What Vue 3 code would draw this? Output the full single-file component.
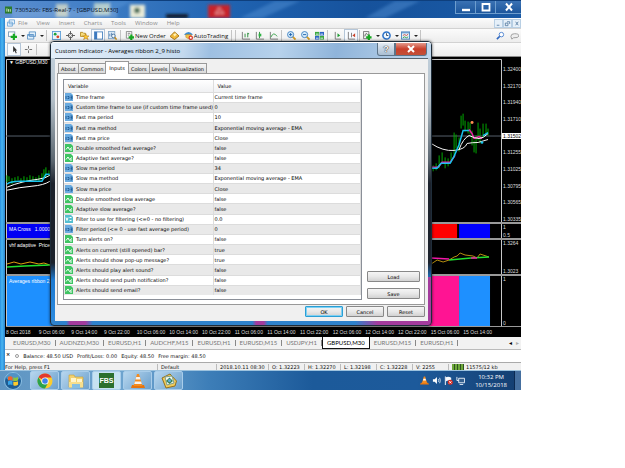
<script setup>
import { ref } from 'vue'

const menus = ['File', 'View', 'Insert', 'Charts', 'Tools', 'Window', 'Help']

const tools = [
  { id: 'chart', caret: true },
  { id: 'profiles', caret: true },
  { id: 'sep' },
  { id: 'market' },
  { id: 'cross' },
  { id: 'folder' },
  { id: 'panel', on: true },
  { id: 'tester' },
  { id: 'sep' },
  { id: 'order', text: 'New Order' },
  { id: 'meta' },
  { id: 'auto', text: 'AutoTrading' },
  { id: 'sep' },
  { id: 'sep' },
  { id: 'bars' },
  { id: 'candles' },
  { id: 'line' },
  { id: 'sep' },
  { id: 'zoomin' },
  { id: 'zoomout' },
  { id: 'tile' },
  { id: 'sep' },
  { id: 'scroll' },
  { id: 'shift', on: true },
  { id: 'sep' },
  { id: 'indicator', caret: true },
  { id: 'clock', caret: true },
  { id: 'template', caret: true },
  { id: 'sep' },
]

const dialogTabs = ['About', 'Common', 'Inputs', 'Colors', 'Levels', 'Visualization']
const activeTab = ref('Inputs')

const rows = [
  ['n', 'Time frame', 'Current time frame'],
  ['n', 'Custom time frame to use (if custom time frame used)', '0'],
  ['n', 'Fast ma period', '10'],
  ['n', 'Fast ma method', 'Exponential moving average - EMA'],
  ['n', 'Fast ma price', 'Close'],
  ['b', 'Double smoothed fast average?', 'false'],
  ['b', 'Adaptive fast average?', 'false'],
  ['n', 'Slow ma period', '34'],
  ['n', 'Slow ma method', 'Exponential moving average - EMA'],
  ['n', 'Slow ma price', 'Close'],
  ['b', 'Double smoothed slow average', 'false'],
  ['b', 'Adaptive slow average?', 'false'],
  ['d', 'Filter to use for filtering (<=0 - no filtering)', '0.0'],
  ['n', 'Filter period (<= 0 - use fast average period)', '0'],
  ['b', 'Turn alerts on?', 'false'],
  ['b', 'Alerts on current (still opened) bar?', 'true'],
  ['b', 'Alerts should show pop-up message?', 'true'],
  ['b', 'Alerts should play alert sound?', 'false'],
  ['b', 'Alerts should send push notification?', 'false'],
  ['b', 'Alerts should send email?', 'false'],
]

const prices = ['1.32400', '1.32170', '1.31940', '1.31710', '1.31502', '1.31255', '1.31025', '1.30795', '1.30565', '1.30335']

const times = [
  '8 Oct 2018', '9 Oct 06:00', '9 Oct 14:00', '9 Oct 22:00', '10 Oct 06:00', '10 Oct 14:00', '10 Oct 22:00',
  '11 Oct 06:00', '11 Oct 14:00', '11 Oct 22:00', '12 Oct 06:00', '12 Oct 14:00', '12 Oct 22:00', '15 Oct 06:00', '15 Oct 14:00',
]

const chartTabs = [
  'EURUSD,M30', 'AUDNZD,M30', 'EURUSD,H1', 'AUDCHF,M15', 'EURUSD,H1', 'EURUSD,M15', 'USDJPY,H1', 'GBPUSD,M30', 'EURUSD,M15', 'EURUSD,H1',
]
const activeChart = ref(7)

const quote = ['O: 1.32223', 'H: 1.32270', 'L: 1.32198', 'C: 1.32228', 'V: 2255']

/* x, high, low of each candle */
const candlesLeft = [
  [7, 175, 182], [9, 176, 181], [12, 178, 184], [15, 177, 182], [18, 176, 180], [21, 178, 183], [24, 176, 181],
  [27, 177, 181], [30, 175, 181], [33, 176, 180], [36, 177, 181], [39, 175, 181], [42, 173, 180], [44, 169, 178], [46, 167, 177], [49, 170, 176],
]
const candlesRight = [
  [434, 165, 171], [437, 163, 170], [440, 155, 168], [443, 152, 162], [446, 157, 168], [449, 158, 166], [452, 152, 162],
  [455, 132, 157], [457, 134, 148], [460, 137, 151], [462, 115, 128], [464, 113, 125], [466, 120, 131], [469, 121, 133],
  [471, 122, 134], [473, 130, 145], [475, 140, 152], [477, 135, 153], [479, 122, 140], [481, 128, 143], [484, 123, 137],
  [487, 123, 134], [489, 128, 135],
]
const wicks = (list) => list.map(([x, a, b]) => `M${x} ${a}V${b}`).join('')
</script>

<template>
  <main class="screen">
    <header class="titlebar">
      <svg class="backdrop" viewBox="0 0 521 18" preserveAspectRatio="none" aria-hidden="true">
        <defs>
          <filter id="haze" x="-20%" y="-20%" width="140%" height="140%"><feGaussianBlur stdDeviation="1.5" /></filter>
        </defs>
        <g filter="url(#haze)">
          <path d="M80 18L110 0H132L100 18ZM240 18L275 0H300L262 18ZM365 18L395 0H420L385 18Z" fill="#5d9bdb" opacity=".4" />
          <rect x="12" y="9" width="105" height="9" fill="#7fa9dc" opacity=".55" />
          <rect x="56" y="3" width="12" height="14" fill="#d9ddc8" opacity=".8" />
          <rect x="94" y="2" width="16" height="13" fill="#cfe0cf" opacity=".8" />
          <rect x="130" y="4" width="15" height="14" fill="#ebedd9" />
          <circle cx="137" cy="10" r="3" fill="#35624a" />
          <rect x="166" y="14" width="22" height="4" fill="#0b1422" />
          <rect x="208" y="4" width="22" height="14" fill="#c8202c" />
          <path d="M219 7L216 14M219 7L223 13M215 13H224" stroke="#f3b7b7" fill="none" />
        </g>
      </svg>
      <svg class="appicon" viewBox="0 0 8 8" aria-hidden="true">
        <rect width="8" height="8" fill="#2c7a2e" /><path d="M1 3H3M1 5H3M4 3V6M6 3V6" stroke="#d8f0c8" />
      </svg>
      <h1>7305206: FBS-Real-7 - [GBPUSD,M30]</h1>
      <div class="winbtns">
        <button aria-label="Minimize"><svg viewBox="0 0 12 10"><path d="M2 8H10" stroke="#fff" stroke-width="2.4" /></svg></button>
        <button aria-label="Maximize"><svg viewBox="0 0 12 10"><path d="M2.500 2H9.500V8.500H2.500Z" stroke="#fff" stroke-width="1.800" fill="none" /></svg></button>
        <button aria-label="Close"><svg viewBox="0 0 12 10"><path d="M3 1.500L9 8.500M9 1.500L3 8.500" stroke="#fff" stroke-width="2" /></svg></button>
      </div>
    </header>

    <div class="body">
      <nav class="menubar">
        <svg class="mdi" viewBox="0 0 9 8" aria-hidden="true"><path d="M2.500 .5H8.500V5H2.500ZM.5 3H6V7.500H.5Z" fill="#e8f3fc" stroke="#6fa6d6" /></svg>
        <a v-for="m in menus" :key="m" href="#">{{ m }}</a>
        <div class="mdibtns">
          <button aria-label="Minimize chart"><svg viewBox="0 0 8 8"><path d="M2 6H5" stroke="#5a7fa4" /></svg></button>
          <button aria-label="Restore chart"><svg viewBox="0 0 8 8"><path d="M3.500 2H6.500V4.500M1.500 3.500H4.500V6.500H1.500Z" fill="none" stroke="#5a7fa4" /></svg></button>
          <button aria-label="Close chart"><svg viewBox="0 0 8 8"><path d="M3 2L6 6M6 2L3 6" stroke="#5a7fa4" /></svg></button>
        </div>
      </nav>

      <div class="toolbar">
        <template v-for="(t, i) in tools" :key="i">
          <span v-if="t.id === 'sep'" class="sep"></span>
          <button v-else :class="['tool', { on: t.on, text: t.text, drop: t.caret }]" :aria-label="t.text || t.id">
            <svg viewBox="0 0 10 10" aria-hidden="true">
              <g v-if="t.id === 'chart'"><rect x=".5" y="1" width="7" height="5" fill="#fff" stroke="#7d9bb5" /><path d="M6.500 3V10M3 6.500H10" stroke="#16a821" stroke-width="2.400" /></g>
              <g v-else-if="t.id === 'profiles'"><path d="M2.500 1H9.500V6H2.500ZM.5 4H7.500V9H.5Z" fill="#e2f0fb" stroke="#5c94c6" /><path d="M1 4.500H7" stroke="#4e8cc8" /></g>
              <g v-else-if="t.id === 'market'"><rect x=".5" y=".5" width="9" height="9" fill="#e9f4fd" stroke="#5fa0d8" /><path d="M2 4L4 2L5 4Z" fill="#169c2c" /><circle cx="3.500" cy="3.500" r="1.500" fill="#22a33a" /><circle cx="6.500" cy="6.500" r="1.600" fill="#dd4426" /></g>
              <g v-else-if="t.id === 'cross'" stroke="#555" fill="none"><circle cx="5" cy="5" r="2.500" /><path d="M5 0V4M5 6V10M0 5H4M6 5H10" /></g>
              <g v-else-if="t.id === 'folder'"><path d="M.5 1.500H3L4 2.500H6V6H.5Z" fill="#f7dc7d" stroke="#b58a22" /><path d="M6.500 3L7.500 5.500H10L8 7L9 9.500L6.500 8L4 9.500L5 7L3 5.500H5.500Z" fill="#ffc933" stroke="#b97c10" stroke-width=".6" /></g>
              <g v-else-if="t.id === 'panel'"><rect x=".5" y="1" width="9" height="8" fill="#fff" stroke="#4a84c0" /><rect x="1" y="1" width="2.500" height="8" fill="#3c79c0" /></g>
              <g v-else-if="t.id === 'tester'"><rect x=".5" y=".5" width="7" height="8" fill="#dbeaf7" stroke="#83a8cb" /><path d="M2 6V3M4 5V2" stroke="#5a86b8" /><circle cx="6" cy="5.500" r="2" fill="#f4fbff" stroke="#456e99" /><path d="M7.500 7L9.500 9.500" stroke="#c78d19" stroke-width="1.600" /></g>
              <g v-else-if="t.id === 'order'"><path d="M1.500 .5H7.500V8H1.500Z" fill="#fff" stroke="#888" /><path d="M3 2.500H6M3 4.500H5" stroke="#777" /><path d="M7 4V10M4 7H10" stroke="#16a821" stroke-width="2.400" /></g>
              <g v-else-if="t.id === 'meta'"><path d="M0 6L5 1L10 5.500L5 9.500Z" fill="#f0b83a" stroke="#a3700e" /><path d="M3.500 4L6 2.500L7.500 4L5 6Z" fill="#fff2b4" /></g>
              <g v-else-if="t.id === 'auto'"><path d="M0 4Q5-2 10 4L7 5H3Z" fill="#3a8bd0" /><path d="M2 4H8V7Q5 10 2 7Z" fill="#f2c34a" stroke="#ad8022" stroke-width=".5" /><circle cx="7.500" cy="7.500" r="2.500" fill="#de3320" /><rect x="6.500" y="6.500" width="2" height="2" fill="#fff" /></g>
              <g v-else-if="t.id === 'bars'" fill="none"><path d="M1.500 1V9H10" stroke="#777" /><path d="M4.500 3V7M7.500 2V7M7.500 3H9" stroke="#258b35" /></g>
              <g v-else-if="t.id === 'candles'" fill="none"><path d="M1.500 1V9H10" stroke="#777" /><path d="M5 1V8" stroke="#258b35" /><rect x="4" y="3" width="3" height="3" fill="#2fb344" /></g>
              <g v-else-if="t.id === 'line'" fill="none"><path d="M1.500 1V9H10" stroke="#777" /><path d="M2 7Q5 0 9 6" stroke="#36a047" /></g>
              <g v-else-if="t.id === 'zoomin' || t.id === 'zoomout'"><path d="M6 6L9.500 9.500" stroke="#d49a20" stroke-width="2" /><circle cx="4" cy="4" r="3.400" fill="#d8edfb" stroke="#3c7fc2" /><path d="M2.200 4H5.800" stroke="#1c5faa" /><path v-if="t.id === 'zoomin'" d="M4 2.200V5.800" stroke="#1c5faa" /></g>
              <g v-else-if="t.id === 'tile'"><rect x="0" y="1" width="4.700" height="4" fill="#3ba83d" /><rect x="5.300" y="1" width="4.700" height="4" fill="#2c64c4" /><rect x="0" y="5.500" width="4.700" height="4" fill="#2c64c4" /><rect x="5.300" y="5.500" width="4.700" height="4" fill="#3ba83d" /><path d="M1 3.500H4M6 3.500H9M1 8H4M6 8H9" stroke="#e9f4ff" /></g>
              <g v-else-if="t.id === 'scroll'" fill="none"><path d="M2.500 1V9H9" stroke="#777" /><path d="M5 2.500L8 5L5 7Z" fill="#1d9c30" /></g>
              <g v-else-if="t.id === 'shift'" fill="none"><path d="M1.500 1V9H9M5 2V7" stroke="#777" /><path d="M9 2.500L6 5L9 7Z" fill="#c8432a" /></g>
              <g v-else-if="t.id === 'indicator'"><path d="M.5 .5H6.500V8.500H.5Z" fill="#eee" stroke="#777" /><path d="M2 6Q3 1 5 4" fill="none" stroke="#555" /><path d="M6.500 4V10M3.500 7H9.500" stroke="#16a821" stroke-width="2.400" /></g>
              <g v-else-if="t.id === 'clock'"><circle cx="5" cy="5" r="4" fill="#eef7ff" stroke="#2c72c8" stroke-width="1.700" /><path d="M5 2.500V5H7" fill="none" stroke="#33485e" /></g>
              <g v-else-if="t.id === 'template'"><rect x=".5" y="1" width="9" height="8" fill="#e7f2fc" stroke="#4a86c2" /><path d="M1 2H9" stroke="#4a86c2" /><path d="M2 5L4 4L6 5L8 3.500" stroke="#c84a3a" fill="none" /><path d="M2 7.500L4 6.500L6 7.500L8 6.500" stroke="#2d9a42" fill="none" /></g>
            </svg>
            <span v-if="t.text">{{ t.text }}</span>
            <i v-if="t.caret" class="caret"></i>
          </button>
        </template>
        <span class="grow"></span>
        <button class="tool" aria-label="Search"><svg viewBox="0 0 10 10"><path d="M1 9L4.500 5.500" stroke="#2f67c0" stroke-width="1.800" /><circle cx="6" cy="4" r="2.500" fill="#fff" stroke="#4a80cf" /></svg></button>
        <button class="tool" aria-label="Chat"><svg viewBox="0 0 10 10"><path d="M1 6Q1 3 5 3Q10 3 10 5.500Q9 8 4 7.500L2 9Z" fill="#eee" stroke="#999" /></svg></button>
      </div>

      <div class="toolbar second">
        <button class="tool on" aria-label="Cursor"><svg viewBox="0 0 10 10"><path d="M3.500 1V8L5 6.500L6.500 9.500L7.500 9L6.300 6H8Z" fill="#333" /></svg></button>
        <button class="tool" aria-label="Crosshair"><svg viewBox="0 0 10 10"><path d="M5 1V4M5 6V9M1 5H4M6 5H9" stroke="#666" /></svg></button>
        <span class="sep"></span>
      </div>

      <section class="charts">
        <div class="pane price">
          <svg class="plot" viewBox="6 56 497 166" preserveAspectRatio="none" aria-hidden="true">
            <path d="M6.500 222V58.500H502.500V222" fill="none" stroke="#c8c8c8" />
            <path d="M6 135.500H502" stroke="#56616c" />
            <path :d="wicks(candlesLeft)" stroke="#00b400" />
            <path :d="wicks(candlesRight)" stroke="#00a800" />
            <path d="M7 187Q14 184 22 182T38 179T50 175" fill="none" stroke="#fff" />
            <path d="M7 190Q20 187 32 186T50 181" fill="none" stroke="#fff" />
            <path d="M7 184Q10 181 20 181H42L46 174H50" fill="none" stroke="#18c3ee" stroke-width="1.500" />
            <path d="M432 143Q444 151 455 150T468 143Q473 142 479 142L489 139" fill="none" stroke="#f4f4f4" />
            <path d="M432 167L439 167L443 162H451L456 155" fill="none" stroke="#f018a8" stroke-width="1.500" />
            <path d="M432 168H438L442 163H451L455 156L460 144L464 130H470" fill="none" stroke="#18c3ee" stroke-width="1.500" />
            <path d="M470 129L473 133L475 138L480 136L483 138" fill="none" stroke="#f018a8" stroke-width="1.500" />
            <path d="M460 149Q464 138 470 135Q476 138 480 138T489 133" fill="none" stroke="#fff" />
            <path d="M484 135L489 132" stroke="#18c3ee" stroke-width="1.500" />
            <circle cx="473" cy="122" r="1.500" fill="#ff8f50" /><circle cx="483" cy="142" r="1.300" fill="#18c3ee" />
          </svg>
          <p class="tag">▼ GBPUSD,M30 &nbsp;1</p>
          <ol class="axis">
            <li v-for="(p, i) in prices" :key="p" :class="{ current: i === 4 }">{{ p }}</li>
          </ol>
        </div>
        <div class="pane cross">
          <svg class="plot" viewBox="6 223 497 14" preserveAspectRatio="none" aria-hidden="true">
            <rect x="6" y="223" width="50" height="14" fill="#0000f4" /><rect x="425" y="223" width="33" height="14" fill="#fe0000" />
            <rect x="460" y="223" width="31" height="14" fill="#0000fe" /><path d="M6.500 223V237M502.500 223V237" stroke="#c8c8c8" />
          </svg>
          <p class="tag">MA Cross &nbsp; 1.0000</p>
          <ol class="axis"><li>1</li><li>0.5</li></ol>
        </div>
        <div class="pane vhf">
          <svg class="plot" viewBox="6 239 497 34" preserveAspectRatio="none" aria-hidden="true">
            <path d="M7 263L14 261L21 263L30 261L39 263L44 262L50 264" fill="none" stroke="#e0a010" />
            <path d="M7 266L25 265L50 264" fill="none" stroke="#20e030" stroke-width="1.500" />
            <path d="M432 263L438 259L444 261L450 259L455 256L458 255L461 252L466 254L474 255L478 257L481 253L490 256" fill="none" stroke="#b78f10" />
            <path d="M432 257L450 258" stroke="#f018a8" stroke-width="1.500" /><path d="M450 259L472 257L490 256" fill="none" stroke="#20e030" stroke-width="1.500" />
            <path d="M472 257H478" stroke="#f018a8" stroke-width="1.500" /><path d="M6.500 239V273M502.500 239V273" stroke="#c8c8c8" />
          </svg>
          <p class="tag">vhf adaptive &nbsp;Price</p>
          <ol class="axis"><li>1.3264</li><li>1.3023</li></ol>
        </div>
        <div class="pane ribbon">
          <svg class="plot" viewBox="6 275 497 50" preserveAspectRatio="none" aria-hidden="true">
            <rect x="6" y="275" width="50" height="50" fill="#1e90ff" /><rect x="425" y="275" width="35" height="50" fill="#ff1493" />
            <rect x="460" y="275" width="31" height="50" fill="#1e90ff" /><path d="M6.500 275V325M502.500 275V325" stroke="#c8c8c8" />
          </svg>
          <p class="tag">Averages ribbon 2_</p>
          <ol class="axis"><li>1</li><li>0</li></ol>
        </div>
        <ol class="times"><li v-for="t in times" :key="t">{{ t }}</li></ol>
      </section>

      <nav class="charttabs">
        <button v-for="(c, i) in chartTabs" :key="i" :class="{ active: i === activeChart }" @click="activeChart = i">{{ c }}</button>
        <span class="grow"></span>
        <button class="arrow" aria-label="Previous">◂</button>
        <button class="arrow dim" aria-label="Next">▸</button>
      </nav>

      <div class="balance">
        <span class="close">×</span><i class="dot"></i>
        <span>Balance: 48.50 USD</span><span>Profit/Loss: 0.00</span><span>Equity: 48.50</span><span>Free margin: 48.50</span>
      </div>

      <footer class="status">
        <span class="help">For Help, press F1</span>
        <span class="profile">Default</span>
        <span class="date">2018.10.11 08:30</span>
        <span v-for="q in quote" :key="q" class="q">{{ q }}</span>
        <span class="net"><i class="signal"></i>11575/12 kb</span>
      </footer>
    </div>

    <footer class="taskbar">
      <button class="start" aria-label="Start">
        <svg viewBox="0 0 18 18"><circle cx="9" cy="9" r="8.500" fill="#1d5c93" stroke="#8fc3e6" /><ellipse cx="9" cy="5" rx="7" ry="4" fill="#6aa9d8" opacity=".7" /><path d="M4 5Q6 3.500 8.500 5V8.500Q6 7.500 4 8.500Z" fill="#f0642a" /><path d="M9.300 5.200Q11.500 6.500 14 5V8.500Q11.500 10 9.300 8.700Z" fill="#8cc63e" /><path d="M4 9.300Q6 8.300 8.500 9.300V13Q6 12 4 13Z" fill="#35a4e8" /><path d="M9.300 9.500Q11.500 10.800 14 9.300V12.800Q11.500 14.500 9.300 13.200Z" fill="#fcca2c" /></svg>
      </button>
      <button class="task" aria-label="Chrome">
        <svg viewBox="0 0 16 16"><circle cx="8" cy="8" r="7.500" fill="#fbcc2d" /><path d="M8 8L1.500 4.200A7.500 7.500 0 0 1 14.600 4.400H8Z" fill="#e23a2e" /><path d="M1.500 4.200A7.500 7.500 0 0 0 8 15.500L11 10L5 10Z" fill="#2ba24c" /><circle cx="8" cy="8" r="3.600" fill="#fff" /><circle cx="8" cy="8" r="2.800" fill="#3f82ea" /></svg>
      </button>
      <button class="task" aria-label="Explorer">
        <svg viewBox="0 0 16 16"><path d="M1 2H6L7 4H15V14H1Z" fill="#f3d271" stroke="#c99d31" stroke-width=".6" /><path d="M3 5H8V13H3ZM9 6H14V13H9Z" fill="#fff5cc" /><path d="M1 9H15V14.500H1Z" fill="#f7df8d" /><path d="M4 11H12V15H4Z" fill="#85bfe4" /></svg>
      </button>
      <button class="task lit" aria-label="FBS"><span class="fbs">FBS</span></button>
      <button class="task" aria-label="VLC">
        <svg viewBox="0 0 16 16"><path d="M2 12H14L15 15H1Z" fill="#e6740f" /><path d="M7 1H9L12.500 13H3.500Z" fill="#f48b1f" /><path d="M6.200 4H9.800L10.500 6.500H5.500ZM4.900 8.500H11.100L11.800 11H4.200Z" fill="#f6f3ee" /></svg>
      </button>
      <button class="task" aria-label="MetaTrader">
        <svg viewBox="0 0 16 16"><path d="M1 5L9 1L15.500 8L14 13L5 15Z" fill="#f1cb5b" stroke="#93701d" /><path d="M4 4L11 3L13 10L6 12Z" fill="#f3f7ef" stroke="#7ea08f" /><path d="M8.500 4.500L12 8L8.500 11L5 8Z" fill="#3b8656" /><circle cx="8.500" cy="7.500" r="1.500" fill="#5faade" /></svg>
      </button>
      <span class="grow"></span>
      <div class="tray">
        <svg viewBox="0 0 10 10"><path d="M1 7.500H9L10 9.500H0Z" fill="#e6740f" /><path d="M4.300 .5H5.700L8 8H2Z" fill="#f48b1f" /><path d="M3.800 3H6.200L6.700 5H3.300Z" fill="#fff" /></svg>
        <svg viewBox="0 0 10 10"><path d="M1 3.500H3L5.500 1V9L3 6.500H1Z" fill="#fff" /><path d="M7 3.500Q8 5 7 6.500M8.500 2Q10 5 8.500 8" fill="none" stroke="#d5e4f2" /></svg>
        <svg viewBox="0 0 10 10"><path d="M1.500 .5V10" stroke="#fff" /><path d="M2 1.500Q5 0 8 2V6Q5 4 2 6Z" fill="#f4f8fc" /><circle cx="7" cy="7" r="2.800" fill="#d92b20" /><path d="M5.800 5.800L8.200 8.200M8.200 5.800L5.800 8.200" stroke="#fff" /></svg>
        <svg viewBox="0 0 10 10"><path d="M3 2.500H9.500V7.500H3Z" fill="#35608f" stroke="#eef4fa" /><path d="M1 1V5H3M4 9.500H8" fill="none" stroke="#eef4fa" /></svg>
      </div>
      <p class="clock"><span>10:32 PM</span><span>10/15/2018</span></p>
      <i class="peek"></i>
    </footer>

    <section class="dialog" role="dialog" aria-labelledby="dlg">
      <header>
        <h2 id="dlg">Custom Indicator - Averages ribbon 2_9 histo</h2>
        <button class="q" aria-label="Help">?</button>
        <button class="x" aria-label="Close"><svg viewBox="0 0 10 8"><path d="M2 1L8 7M8 1L2 7" stroke="#fff" stroke-width="2" /></svg></button>
      </header>
      <div class="content">
        <div class="tabs" role="tablist">
          <button v-for="t in dialogTabs" :key="t" role="tab" :class="{ active: t === activeTab }" @click="activeTab = t">{{ t }}</button>
        </div>
        <div class="sheet">
          <div class="list">
            <table>
              <thead><tr><th class="var">Variable</th><th>Value</th></tr></thead>
              <tbody>
                <tr v-for="r in rows" :key="r[1]">
                  <td>
                    <span class="name">
                      <svg viewBox="0 0 8 8" aria-hidden="true">
                        <path d="M0 0H6L8 2V8H0Z" :class="'t-' + r[0]" />
                        <path v-if="r[0] === 'n'" d="M1 3V6M2.500 3.500H4V5.500H2.500M5.500 3H7V6H5.500M5.500 4.500H7" fill="none" stroke="#17508c" stroke-width=".8" />
                        <path v-else-if="r[0] === 'b'" d="M1 5.500L3 3L4.500 5.500L7 3.500M5 6H7" fill="none" stroke="#fff" />
                        <path v-else d="M1 2.500L2 5.500L3 2.500M4.500 2.500H6.500M4.500 5.500H6.500" fill="none" stroke="#fff" />
                      </svg>{{ r[1] }}
                    </span>
                  </td>
                  <td>{{ r[2] }}</td>
                </tr>
              </tbody>
            </table>
          </div>
          <div class="side"><button>Load</button><button>Save</button></div>
        </div>
        <div class="actions"><button class="ok">OK</button><button>Cancel</button><button>Reset</button></div>
      </div>
    </section>
  </main>
</template>

<style>
body { margin: 0; background: #fff; }
</style>

<style scoped>
* { box-sizing: border-box; }
.screen {
  position: relative;
  width: calc(100% - 104px);
  overflow: hidden;
  font: 6px/8px "Open Sans", "Noto Sans", sans-serif;
  color: #111;
  background: linear-gradient(90deg, #2a8ede, #48b6f2 2px, #2b83cf 5px);
}
button { border: 0; padding: 0; margin: 0; background: none; font: inherit; color: inherit; }
h1, h2, p, ol { margin: 0; padding: 0; font: inherit; list-style: none; }
a { color: inherit; text-decoration: none; }
svg { display: block; }
.grow { flex: 1; }

.titlebar { position: relative; display: flex; align-items: center; gap: 3px; height: 18px; padding-left: 5px; background: linear-gradient(90deg, #5c8fd0, #3d7cc4 20%, #1f62b0 45%, #16529c 70%, #1a5aa5); overflow: hidden; border-top: 1px solid #0e3f7d; }
.backdrop { position: absolute; inset: 0; width: 100%; height: 100%; }
.appicon { position: relative; width: 7px; height: 8px; }
h1 { position: relative; flex: 1; color: #06101e; white-space: nowrap; }
.winbtns { position: relative; display: flex; align-self: flex-start; height: 13px; border: 1px solid #6d9dce; border-width: 0 0 1px 1px; }
.winbtns button { display: grid; place-items: center; width: 20px; border-right: 1px solid #6d9dce; background: linear-gradient(#3a72b4, #1c569c); }
.winbtns button:last-child { width: 25px; border: 0; }
.winbtns svg { width: 12px; height: 10px; }

.body { margin-left: 5px; background: #f0f0f0; }
.menubar { display: flex; align-items: center; gap: 9px; height: 10px; padding-left: 2px; background: linear-gradient(#fcfcfc, #ececec); color: #8d8d8d; }
.mdi { width: 8px; height: 8px; margin-right: -6px; }
.mdibtns { display: flex; margin-left: auto; }
.mdibtns button { width: 9px; height: 9px; border: 1px solid #b8cfe4; background: #e6f0f9; }
.mdibtns svg { width: 100%; height: 100%; }

.toolbar { display: flex; align-items: center; height: 14px; padding-left: 2px; border-top: 1px solid #d2d2d2; background: linear-gradient(#fbfbfb, #ededed); overflow: hidden; }
.tool { display: flex; flex: none; align-items: center; justify-content: center; gap: 1px; min-width: 14px; height: 13px; white-space: nowrap; }
.tool svg { width: 9px; height: 9px; }
.tool.on { border: 1px solid #b5c6d8; background: #f8fbff; }
.tool.text { padding: 0 2px; }
.tool.drop { width: 19px; }
.caret { margin-left: 3px; border: 2px solid transparent; border-top-color: #222; border-bottom: 0; }
.sep { flex: none; width: 1px; height: 11px; margin: 0 2px 0 1px; background: #c4c4c4; }

.charts { padding-left: 1px; background: #000; color: #ddd; font: 5px/6px "Liberation Sans", sans-serif; border-top: 1px solid #8b8b8b; overflow: hidden; }
.pane { display: flex; position: relative; border-bottom: 2px solid #9a9a9a; }
.plot { flex: 1; min-width: 0; }
.axis { flex: none; display: flex; flex-direction: column; justify-content: space-between; width: 19px; white-space: nowrap; }
.axis li { padding-left: 1px; }
.price .plot { height: 165px; }
.price .axis { padding-top: 9px; }
.price .axis .current { background: #fff; color: #000; }
.cross .plot { height: 14px; }
.vhf .plot { height: 34px; }
.ribbon .plot { height: 50px; }
.ribbon { border-bottom-width: 1px; }
.tag { position: absolute; left: 3px; top: 2px; white-space: nowrap; color: #fff; }
.times { display: grid; grid-template-columns: repeat(15, 1fr); height: 10px; align-items: center; margin-right: 25px; white-space: nowrap; }

.charttabs { display: flex; align-items: center; height: 13px; padding-left: 4px; color: #777; border-bottom: 1px solid #bbb; background: #f2f2f2; font-family: Lato, sans-serif; }
.charttabs button { padding: 0 4px; border-right: 1px solid #888; line-height: 6px; }
.charttabs .active { align-self: stretch; border: 1px solid #111; border-top: 0; color: #000; background: #fff; }
.charttabs .arrow { border: 0; padding: 0 2px; color: #000; }
.charttabs .dim { color: #aaa; }

.balance { display: flex; align-items: center; gap: 4px; height: 13px; background: #fff; font: 5px/8px "DejaVu Sans", sans-serif; border-bottom: 1px solid #aaa; }
.close { padding: 0 1px; font-weight: 700; align-self: flex-start; }
.dot { width: 4px; height: 4px; border: 1px solid #999; border-radius: 50%; }
.status { display: flex; height: 7px; padding-top: 1px; overflow: hidden; white-space: nowrap; font: 5px/6px "DejaVu Sans", sans-serif; }
.status span { padding-left: 3px; border-left: 1px solid #bbb; }
.status .help { flex: 0 0 152px; padding-left: 0; border: 0; }
.status .profile { flex: 0 0 59px; }
.status .date { flex: 0 0 52px; }
.status .q { flex: 0 0 36px; }
.status .net { flex: 1; display: flex; gap: 2px; }
.signal { width: 12px; height: 6px; background: repeating-linear-gradient(90deg, #6ea83a 0 2px, #2e5420 2px 3px); }

.taskbar { position: relative; display: flex; align-items: center; gap: 2px; height: 20px; padding-left: 4px; background: linear-gradient(90deg, #5f95c2, #6ea4cf 25%, #3d7eb8 40%, #1c5a9a 60%, #1d5a9b 80%, #143e70); border-top: 1px solid #9cc2de; }
.start { width: 20px; margin-right: 4px; }
.start svg { width: 18px; height: 18px; }
.task { display: grid; place-items: center; width: 29px; height: 19px; border: 1px solid #a9cdea; border-radius: 2px; background: linear-gradient(135deg, #b7d6ee, #6ba0cd); }
.task.lit { background: #c6e2f2; }
.task svg { width: 16px; height: 16px; }
.fbs { width: 15px; padding: 4px 0 3px; background: #2b702f; color: #fff; font: 700 7px/8px "Liberation Sans", sans-serif; }
.tray { display: flex; gap: 3px; padding-right: 8px; }
.tray svg { width: 9px; height: 9px; }
.clock { display: grid; padding-right: 5px; color: #fff; text-align: center; }
.peek { align-self: stretch; width: 7px; border-left: 1px solid #0b2a52; background: #456f9f; }

.dialog { position: absolute; left: 50px; top: 41px; width: 382px; padding: 0 3px 4px 4px; border: 1px solid #1f2d3a; border-radius: 4px; box-shadow: 0 0 3px rgba(0, 0, 0, .7); font: 5px/8px "DejaVu Sans", sans-serif; color: #000;
  background: linear-gradient(90deg, #2e82cc 0 4%, #a33b9d 5% 9%, #2e82cc 11% 53%, #a33b9d 54% 56%, #2e82cc 57% 80%, #a33b9d 86%) 0 100% / 100% 5px no-repeat, linear-gradient(#a33b9d, #a33b9d) 100% 100% / 4px 48px no-repeat, linear-gradient(#c4d3e0, #b4c0c9 20%, #5a656f 42%, #1c222c 50%, #1c222c 78%, #1d79cf 84%, #2e8ce0); }
.dialog header { display: flex; align-items: flex-start; height: 16px; margin: 0 -3px 0 -4px; padding-left: 4px; border-radius: 3px 3px 0 0; background: linear-gradient(100deg, #e4effa, #c3d9ee 35%, #9ec0e2 42%, #b7d2ec 60%, #8fb4da 75%, #c1d8ee); border-top: 1px solid #fff; }
h2 { flex: 1; align-self: center; font: 6px/8px "Open Sans", sans-serif; }
.dialog header button { display: grid; place-items: center; height: 13px; border: 1px solid #5d7489; border-top: 0; }
.dialog header .q { width: 18px; background: linear-gradient(#e3ebf3, #a9bed3); font: 700 9px/10px "Liberation Sans", sans-serif; color: #fff; text-shadow: 0 0 1px #222, 0 0 1px #222; border-radius: 0 0 0 3px; }
.dialog header .x { width: 32px; margin-right: 4px; background: linear-gradient(#e59a8c, #c9402c 50%, #c25039); border-radius: 0 0 3px 0; }
.dialog header svg { width: 10px; height: 8px; }
.content { padding: 2px 3px 4px 2px; background: #f0f0f0; border-top: 1px solid #56636f; }
.tabs { display: flex; align-items: flex-end; height: 12px; padding-left: 1px; }
.tabs button { height: 10px; padding: 0 2px; border: 1px solid #999; border-bottom: 0; margin-right: -1px; background: linear-gradient(#f6f6f6, #dadada); }
.tabs .active { position: relative; height: 13px; margin-bottom: -1px; padding: 0 3px; background: #fff; }
.sheet { display: flex; gap: 5px; padding: 5px 4px 4px 5px; border: 1px solid #999; background: #fff; }
.list { flex: 1; padding-bottom: 4px; border: 1px solid #8a8f98; }
table { width: 100%; height: 215px; border-collapse: collapse; table-layout: fixed; }
th { height: 12px; padding: 0 4px; text-align: left; font-weight: 400; background: linear-gradient(#fff, #f0f1f3); border-right: 1px solid #ddd; }
.var { width: 149px; }
td { padding: 0 1px; border-top: 1px solid #dcdcdc; border-right: 1px solid #dcdcdc; white-space: nowrap; }
tbody tr:nth-child(even) { background: #e9e9e9; }
.name { display: flex; align-items: center; gap: 3px; }
.name svg { flex: none; width: 8px; height: 8px; }
.t-n { fill: #6aabe0; }
.t-b { fill: #3fc463; }
.t-d { fill: #55bfd0; }
.side { flex: none; display: flex; flex-direction: column; justify-content: flex-end; gap: 6px; width: 53px; padding-bottom: 1px; }
.side button, .actions button { height: 11px; border: 1px solid #888; border-radius: 1px; background: linear-gradient(#f5f5f5, #e8e8e8 50%, #d2d2d2); }
.actions { display: flex; justify-content: flex-end; gap: 3px; padding-top: 1px; }
.actions button { width: 38px; }
.actions .ok { border-color: #2a9fd6; box-shadow: inset 0 0 0 1px #7fd0f2; }
</style>
